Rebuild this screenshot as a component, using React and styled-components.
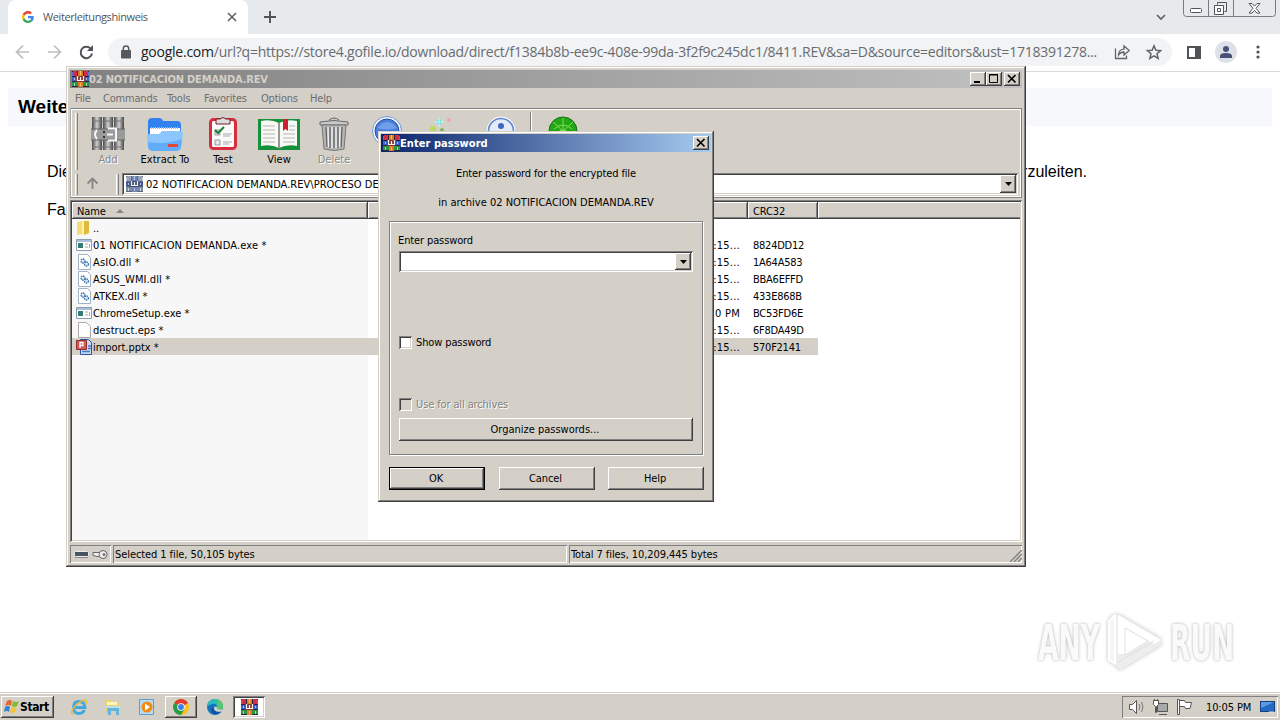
import React from 'react';
import styled, { createGlobalStyle, css } from 'styled-components';


const files = [
    { name: '..', icon: 'folder', date: '', crc: '' },
    { name: '01 NOTIFICACION DEMANDA.exe *', icon: 'exe', date: ':15...', crc: '8824DD12', spacing: 0.14 },
    { name: 'AsIO.dll *', icon: 'dll', date: ':15...', crc: '1A64A583', spacing: 0.18 },
    { name: 'ASUS_WMI.dll *', icon: 'dll', date: ':15...', crc: 'BBA6EFFD', spacing: 0.1 },
    { name: 'ATKEX.dll *', icon: 'dll', date: ':15...', crc: '433E868B', spacing: 0 },
    { name: 'ChromeSetup.exe *', icon: 'exe', date: '20 PM', crc: 'BC53FD6E', spacing: 0 },
    { name: 'destruct.eps *', icon: 'blank', date: ':15...', crc: '6F8DA49D', spacing: 0.05 },
    { name: 'import.pptx *', icon: 'pptx', date: ':15...', crc: '570F2141', spacing: -0.05, selected: true },
];

const App = () => {
    return (
        <>
            <GlobalStyle />
            <Screen>
                <TabStrip>
                    <Tab>
                        <GoogleIcon />
                        <TabTitle>Weiterleitungshinweis</TabTitle>
                        <svg width="10" height="10" viewBox="0 0 10 10"><path d="M1 1l8 8M9 1l-8 8" stroke="#5f6368" strokeWidth="1.6" /></svg>
                    </Tab>
                    <NewTab width="14" height="14" viewBox="0 0 14 14"><path d="M7 1v12M1 7h12" stroke="#505357" strokeWidth="1.9" /></NewTab>
                    <Chevron width="10" height="7" viewBox="0 0 10 7"><path d="M1 1l4 4 4-4" fill="none" stroke="#5f6368" strokeWidth="1.7" /></Chevron>
                    <ChromeControls />
                </TabStrip>

                <BrowserBar>
                    <NavIcons />
                    <AddressPill>
                        <svg width="10" height="14" viewBox="0 0 10 14"><rect x="0" y="5" width="10" height="8.5" rx="1" fill="#55585d" /><path d="M2.3 6V3.6a2.7 2.7 0 0 1 5.4 0V6" fill="none" stroke="#55585d" strokeWidth="1.5" /></svg>
                        <Url><b>google.com</b>/url?q=https://store4.gofile.io/download/direct/f1384b8b-ee9c-408e-99da-3f2f9c245dc1/8411.REV&amp;sa=D&amp;source=editors&amp;ust=1718391278...</Url>
                        <PillIcons />
                    </AddressPill>
                    <BarIcons />
                </BrowserBar>

                <Page>
                    <Banner>Weite</Banner>
                    <Paragraph><span>Die</span><span>rzuleiten.</span></Paragraph>
                    <Paragraph><span>Fa</span></Paragraph>
                </Page>

                <Taskbar>
                    <StartButton>
                        <StartIcon />
                        <b>Start</b>
                    </StartButton>
                    <TaskItem><IeIcon /></TaskItem>
                    <TaskItem><ExplorerIcon /></TaskItem>
                    <TaskItem><PlayerIcon /></TaskItem>
                    <TaskItem $state="raised"><ChromeIcon /></TaskItem>
                    <TaskItem><EdgeIcon /></TaskItem>
                    <TaskItem $state="pressed"><RarIcon /></TaskItem>
                    <Tray>
                        <TrayIcons />
                        <Clock>10:05 PM</Clock>
                        <svg width="16" height="14" viewBox="0 0 16 14"><rect x=".5" y="1.5" width="14" height="10" fill="#2469c4" stroke="#173f7c" /><path d="M1 2h13L1 8z" fill="#5b9ae4" /><path d="M9 12h5" stroke="#eee" /></svg>
                    </Tray>
                </Taskbar>

                <ArchiveWindow>
                    <TitleBar>
                        <RarIcon />
                        <TitleText $spacing="-0.17px">02 NOTIFICACION DEMANDA.REV</TitleText>
                        <CaptionButton><svg width="16" height="14"><path d="M4 10h6" stroke="#000" strokeWidth="2" /></svg></CaptionButton>
                        <CaptionButton><svg width="16" height="14"><path d="M3.500 2.500h8v8h-8zM3 3h9" fill="none" stroke="#000" /></svg></CaptionButton>
                        <CaptionButton $gap><CloseGlyph /></CaptionButton>
                    </TitleBar>
                    <Menu>
                        <span>File</span><span>Commands</span><span>Tools</span><span>Favorites</span><span>Options</span><span>Help</span>
                    </Menu>

                    <Rebar>
                        <ToolRow>
                            <Grip />
                            <Tool $width={56} $disabled><AddIcon />Add</Tool>
                            <Tool $width={58}><ExtractIcon />Extract To</Tool>
                            <Tool $width={58}><TestIcon />Test</Tool>
                            <Tool $width={54}><ViewIcon />View</Tool>
                            <Tool $width={56} $disabled><DeleteIcon />Delete</Tool>
                            <Tool $width={50}><FindIcon /></Tool>
                            <Tool $width={60}><WizardIcon /></Tool>
                            <Tool $width={58}><InfoIcon /></Tool>
                            <ToolDivider />
                            <Tool $width={62}><ScanIcon /></Tool>
                        </ToolRow>
                        <PathRow>
                            <Grip />
                            <svg width="38" height="18"><path d="M14.500 14V4M9.500 8.500l5-5 5 5" fill="none" stroke="#858585" strokeWidth="1.8" /></svg>
                            <Grip />
                            <PathField>
                                <RarIcon muted />
                                <span>02 NOTIFICACION DEMANDA.REV\PROCESO DE</span>
                                <DropButton><svg width="7" height="4"><path d="M0 0h7L3.500 4z" /></svg></DropButton>
                            </PathField>
                        </PathRow>
                    </Rebar>

                    <FileList>
                        <HeaderRow>
                            <HeaderCell>Name <svg width="8" height="4"><path d="M4 0l4 4H0z" fill="#888" /></svg></HeaderCell>
                            <HeaderCell />
                            <HeaderCell>CRC32</HeaderCell>
                            <HeaderCell $last />
                        </HeaderRow>
                        <Rows>
                            {files.map((file) => (
                                <FileRow key={file.name} $selected={file.selected}>
                                    <FileName $spacing={file.spacing}><FileIcon kind={file.icon} /><span>{file.name}</span></FileName>
                                    <FileDate>{file.date}</FileDate>
                                    <FileCrc>{file.crc}</FileCrc>
                                </FileRow>
                            ))}
                        </Rows>
                    </FileList>

                    <StatusBar>
                        <StatusCell><StatusIcons /></StatusCell>
                        <StatusCell>Selected 1 file, 50,105 bytes</StatusCell>
                        <StatusCell>
                            Total 7 files, 10,209,445 bytes
                            <SizeGrip width="12" height="12"><path d="M0 12L12 0M4 12l8-8M8 12l4-4" stroke="#808080" strokeWidth="1.4" /></SizeGrip>
                        </StatusCell>
                    </StatusBar>
                </ArchiveWindow>

                <Dialog>
                    <TitleBar $active>
                        <RarIcon />
                        <TitleText $active $spacing="0.05px">Enter password</TitleText>
                        <CaptionButton><CloseGlyph /></CaptionButton>
                    </TitleBar>
                    <Message>Enter password for the encrypted file</Message>
                    <Message $spacing="0">in archive 02 NOTIFICACION DEMANDA.REV</Message>
                    <Group>
                        <Label>Enter password</Label>
                        <Combo><DropButton><svg width="7" height="4"><path d="M0 0h7L3.500 4z" /></svg></DropButton></Combo>
                        <CheckLine $top={63}><CheckBox />Show password</CheckLine>
                        <CheckLine $top={48} $disabled><CheckBox $disabled />Use for all archives</CheckLine>
                        <Button $wide>Organize passwords...</Button>
                    </Group>
                    <ButtonRow>
                        <Button $primary>OK</Button>
                        <Button>Cancel</Button>
                        <Button>Help</Button>
                    </ButtonRow>
                </Dialog>

                <Watermark>
                    <WatermarkWord>ANY</WatermarkWord>
                    <svg width="60" height="64" viewBox="0 0 60 64" fill="none" strokeLinejoin="round">
                        <path d="M9 5L3 11v39l6 4z" fill="#f6f6f6" stroke="#fff" strokeWidth="2" />
                        <path d="M14 5l41 24v6L14 60l-4-3V5z" fill="#ededed" />
                        <path d="M12 44V5l43 25-7 4-29-17v27z" fill="#fff" />
                        <path d="M19 18l23 13-23 14z" fill="#fff" stroke="#e2e2e2" />
                        <path d="M12 52l36-21" stroke="#dedede" />
                    </svg>
                    <WatermarkWord>RUN</WatermarkWord>
                </Watermark>
            </Screen>
        </>
    );
}

export default App;


// Icons

const CloseGlyph = () => (
    <svg width="16" height="14"><path d="M4 3l7.500 7.500M11.500 3L4 10.500" stroke="#000" strokeWidth="1.7" /></svg>
)

const RarIcon = ({ muted }) => (
    <svg width="17" height="16" viewBox="0 0 17 16">
        <path d="M0 0h17v16H0z" fill={muted ? '#5a6478' : '#2b2438'} />
        <path d="M1 0h4v5H1zM12 0h4v5h-4z" fill={muted ? '#9aa3b5' : '#cf2f45'} />
        <path d="M0 6h5v4H0zM12 6h5v4h-5z" fill={muted ? '#3f5c94' : '#3a5fd0'} />
        <path d="M0 11h6v4H0zM11 11h6v4h-6z" fill={muted ? '#808b9e' : '#2c9340'} />
        <path d="M0 1h1v4H0zM16 1h1v4h-1z" fill={muted ? '#c5cbd8' : '#5b6fd4'} />
        <path d="M2 7h1v2H2zM14 7h1v2h-1zM2 12h1v3H2zM14 12h1v3h-1z" fill="#fff" opacity=".6" />
        <path d="M6 0h5v16H6z" fill={muted ? '#6e86b8' : '#e07a2c'} />
        <path d="M4 5h9v6H4z" fill={muted ? '#3d4f78' : '#7c3a34'} />
        <path d="M5.500 5v4.500h6V5M8.500 6v3" fill="none" stroke="#f5f0ee" strokeWidth="1.200" />
        <path d="M8 0h1v4H8zM8 12h1v3H8z" fill={muted ? '#b3c1dd' : '#f7c25d'} />
    </svg>
)

const GoogleIcon = () => (
    <svg width="12" height="12" viewBox="0 0 48 48">
        <path fill="#ea4335" d="M24 9.500c3.500 0 6.700 1.200 9.200 3.600l6.900-6.900C35.900 2.400 30.500 0 24 0 14.600 0 6.500 5.400 2.600 13.200l8 6.200C12.400 13.700 17.700 9.500 24 9.500z" />
        <path fill="#4285f4" d="M47 24.500c0-1.600-.2-3.100-.4-4.500H24v9h13c-.6 3-2.300 5.500-4.800 7.200l7.700 6C44.400 38 47 31.800 47 24.500z" />
        <path fill="#fbbc05" d="M10.500 28.600a14.500 14.500 0 0 1 0-9.200l-8-6.200a24 24 0 0 0 0 21.600z" />
        <path fill="#34a853" d="M24 48c6.500 0 11.900-2.100 15.900-5.800l-7.700-6c-2.200 1.500-4.900 2.300-8.200 2.300-6.300 0-11.600-4.200-13.500-9.900l-8 6.200C6.500 42.600 14.600 48 24 48z" />
    </svg>
)

const ChromeControls = () => (
    <Controls width="94" height="18" viewBox="0 0 94 18" fill="none">
        <path d="M.5 0v13.500q0 3 3 3h86q3 0 3-3V0M25.500 0v16M50.500 0v16" stroke="#777c82" />
        <rect x="7.500" y="8.500" width="11" height="4" rx="1" fill="#fff" stroke="#50545b" />
        <path d="M34.500 4.500v-2h9v9h-2" stroke="#50545b" />
        <path d="M31.500 5.500h9v9h-9zM34.500 8.500h3v3h-3z" fill="#fff" stroke="#50545b" />
        <path d="M66 3.500h3l2.500 2.700L74 3.500h3l-4 4.800 4 4.800h-3l-2.500-2.700-2.500 2.700h-3l4-4.800z" fill="#fff" stroke="#50545b" />
    </Controls>
)

const NavIcons = () => (
    <Nav width="80" height="16" viewBox="0 0 80 16" fill="none" strokeWidth="1.7">
        <path d="M14 8H1.500M8 1.500L1.500 8 8 14.500" stroke="#bcbec1" />
        <path d="M33 8h12.500M39 1.500L45.500 8 39 14.500" stroke="#bcbec1" />
        <path d="M75.500 4.500A5.700 5.700 0 1 0 77 9.500" stroke="#4f5358" strokeWidth="2" />
        <path d="M78 1v6h-6z" fill="#4f5358" />
    </Nav>
)

const PillIcons = () => (
    <svg width="48" height="16" viewBox="0 0 48 16" fill="none" stroke="#5f6368" strokeWidth="1.3">
        <path d="M1.500 4.500v10h11v-3M4.500 11c0-4 2.500-5.800 5.500-5.800V2l5.200 4.500L10 11V8C7.500 8 5.800 8.800 4.500 11z" />
        <path d="M40 1.800l1.900 4.400 4.700.4-3.600 3.100 1.100 4.600-4.100-2.500-4.100 2.500L37 9.700l-3.600-3.100 4.700-.4z" strokeWidth="1.500" />
    </svg>
)

const BarIcons = () => (
    <ProfileIcons width="80" height="24" viewBox="0 0 80 24">
        <rect x="2" y="7" width="12" height="11" fill="none" stroke="#505357" strokeWidth="2" />
        <path d="M9 6h6v13H9z" fill="#505357" />
        <circle cx="40" cy="12" r="11" fill="#dfe1e8" />
        <circle cx="40" cy="9" r="3" fill="#47517a" />
        <path d="M34 18v-2q0-3 6-3t6 3v2z" fill="#47517a" />
        <circle cx="72" cy="7" r="1.600" fill="#505357" /><circle cx="72" cy="12" r="1.600" fill="#505357" /><circle cx="72" cy="17" r="1.600" fill="#505357" />
    </ProfileIcons>
)

const AddIcon = () => (
    <svg width="34" height="36" viewBox="0 0 34 36">
        <defs>
            <linearGradient id="book"><stop stopColor="#4a4a4a" /><stop offset=".5" stopColor="#d0d0d0" /><stop offset="1" stopColor="#444" /></linearGradient>
        </defs>
        <path d="M1 1h10v33H1z" fill="url(#book)" />
        <path d="M12 1h10v33H12z" fill="url(#book)" />
        <path d="M23 1h10v33H23z" fill="url(#book)" />
        <path d="M1 5h32M1 31h32" stroke="#777" />
        <path d="M0 13h34v11H0z" fill="#9a9a9a" />
        <path d="M0 13h34M0 24h34" stroke="#666" />
        <path d="M6 14q-4 4.500 0 9" stroke="#f5f5f5" fill="none" strokeWidth="2" />
        <path d="M17 12.500h8v12h-8M16 18.500h6" stroke="#f8f8f8" fill="none" strokeWidth="2" />
        <path d="M13 15v2M13 20v2" stroke="#333" strokeWidth="2" />
    </svg>
)

const ExtractIcon = () => (
    <svg width="38" height="36" viewBox="0 0 38 36">
        <path d="M2 6q0-4 4-4h7q3 0 4 3h14q4 0 4 4v20H2z" fill="#3181f0" />
        <path d="M4 12h30v15H4z" fill="#fff" />
        <path d="M5 12h28" stroke="#bbb" strokeDasharray="1 1" strokeWidth="2" />
        <path d="M1 20q0-2 3-2h9l3-3h17q4 0 4 4l-2 12q-1 4-5 4H7q-4 0-5-4z" fill="#8cc6fd" />
        <path d="M2 26q17 3 34-3l-1 8q-1 4-5 4H7q-4 0-5-4z" fill="#62adfa" />
        <path d="M22 28h10v3H22z" fill="#e34735" />
    </svg>
)

const TestIcon = () => (
    <svg width="30" height="36" viewBox="0 0 30 36">
        <rect x="2.500" y="3.500" width="25" height="29" rx="3" fill="#fafafa" stroke="#d92c3f" strokeWidth="3" />
        <path d="M8 3h4q3-3 6 0h4v5H8z" fill="#ddd" stroke="#702026" />
        <path d="M7 14h5v5H7zM7 24h5v5H7z" fill="#e6e6e6" stroke="#999" />
        <path d="M7 14l3 3 6-6" fill="none" stroke="#148434" strokeWidth="2" />
        <path d="M15 18h9M15 20h7M15 26h9M15 28h6" stroke="#aaa" />
    </svg>
)

const ViewIcon = () => (
    <svg width="44" height="36" viewBox="0 0 44 36">
        <path d="M1 3h42v31H1z" fill="#15913c" />
        <path d="M4 5q10-2 18 2 8-4 18-2v25q-10-2-18 2-8-4-18-2z" fill="#f8f8f4" />
        <path d="M22 6v27" stroke="#777" strokeWidth="1.500" />
        <path d="M6 10h12M6 14h12M6 18h12M6 22h12M6 26h12M26 18h12M26 22h12M26 26h12M32 10h6M32 14h6" stroke="#b5b5b5" />
        <path d="M26 3h5v12l-2.500-2-2.500 2z" fill="#ca2030" />
    </svg>
)

const DeleteIcon = () => (
    <svg width="32" height="36" viewBox="0 0 32 36">
        <path d="M11 4q5-4 10 0M2 6q14-3 28 0v3H2z" fill="#c9c9c9" stroke="#666" />
        <path d="M4 9h24l-2 24q-10 3-20 0z" fill="#b5b5b5" stroke="#777" />
        <path d="M8 11l1 20M12 11v21M16 11v21M20 11v21M24 11l-1 20" stroke="#666" strokeWidth="1.300" />
        <path d="M10 11l.5 20M14 11v21M18 11v21M22 11l-.5 20" stroke="#f4f4f4" strokeWidth="1.300" />
    </svg>
)

const FindIcon = () => (
    <svg width="32" height="36" viewBox="0 0 32 36"><circle cx="16" cy="15" r="14.500" fill="#f3f8ff" stroke="#6e97d8" /><circle cx="16" cy="15" r="12" fill="#4a7fdb" stroke="#2350a0" /><path d="M6 12q10-12 20 0-10 3-20 0z" fill="#6f9fe8" /></svg>
)

const WizardIcon = () => (
    <svg width="32" height="36" viewBox="0 0 32 36"><circle cx="13" cy="6" r="2.500" fill="#63dcdc" /><circle cx="23" cy="4" r="2" fill="#efa6b3" /><circle cx="7" cy="13" r="3" fill="#b8dc54" /><circle cx="16" cy="14" r="2" fill="#82b35b" /><path d="M13 2v9M9 6h9" stroke="#bff" /></svg>
)

const InfoIcon = () => (
    <svg width="32" height="36" viewBox="0 0 32 36"><circle cx="16" cy="15" r="14" fill="#e4ebf8" stroke="#fff" /><circle cx="16" cy="15" r="12.500" fill="none" stroke="#6287cb" strokeWidth="1.600" /><circle cx="16" cy="10" r="3" fill="#3d69c1" /></svg>
)

const ScanIcon = () => (
    <svg width="32" height="36" viewBox="0 0 32 36"><circle cx="16" cy="15" r="14" fill="#23a815" stroke="#157018" /><path d="M16 2v26M6 6l20 18M26 6L6 24M7 13q9-8 18 0M10 17q6-6 12 0" fill="none" stroke="#7be052" /></svg>
)

const FileIcon = ({ kind }) => (
    <svg width="16" height="16" viewBox="0 0 16 16">
        {kind === 'folder' && <><path d="M1 2l6-1v13l-6 1z" fill="#f4db73" /><path d="M8 1h5v12l-5 2z" fill="#dfbb3d" /><path d="M6 2l2-1v13l-2 1z" fill="#fff2ab" /></>}
        {kind === 'exe' && <><path d="M.5 2.500h15v11H.5z" fill="#fff" stroke="#8b9db0" /><path d="M1 3h14v2H1z" fill="#a9c0db" /><path d="M2 6h5v5H2z" fill="#347d72" /><path d="M9 7h3M9 10h3M13.500 7v4" stroke="#aaa" /></>}
        {kind === 'dll' && <><path d="M2.500.5h9l3 3v12h-12z" fill="#fff" stroke="#9fb2c4" /><circle cx="7" cy="7" r="2" fill="#dfeaf5" stroke="#3974ad" strokeDasharray="1.500 .6" strokeWidth="1.300" /><circle cx="10.500" cy="10" r="2" fill="#dfeaf5" stroke="#3974ad" strokeDasharray="1.500 .6" strokeWidth="1.300" /></>}
        {kind === 'blank' && <path d="M2.500.5h8l4 4v11h-12z" fill="#fff" stroke="#aaa" />}
        {kind === 'pptx' && <><path d="M4.500.5h8l3 3v12h-11z" fill="#c9d7f0" stroke="#34539e" /><path d="M6 12.500h8M12 7h3M12 9.500h3" stroke="#4e79be" strokeWidth="1.500" /><path d="M.5 1.500h10v9H.5z" fill="#d05a50" stroke="#8c2f35" /><path d="M4 9V3.500h3v3H4" fill="none" stroke="#fff" strokeWidth="1.300" /></>}
    </svg>
)

const StatusIcons = () => (
    <svg width="36" height="13" viewBox="0 0 36 13">
        <rect x="2.500" y="3.500" width="14" height="5" rx="1" fill="#465560" stroke="#eee" />
        <path d="M3 9.500h13" stroke="#888" />
        <path d="M21 4.500h7v4h-3l-4-1z" fill="#eee" stroke="#666" />
        <circle cx="31" cy="6.500" r="4" fill="#eee" stroke="#666" /><circle cx="32" cy="6.500" r="1.500" fill="#777" />
    </svg>
)

const StartIcon = () => (
    <svg width="16" height="16" viewBox="0 0 16 16">
        <path d="M3 2q3-2 5 0L7 7Q5 5 1 7z" fill="#e9652d" /><path d="M9 2q3 2 6 0l-2 5q-3 2-5 0z" fill="#83b934" />
        <path d="M1 8q3-2 5 0l-1 5q-2-2-5 0z" fill="#3781cf" /><path d="M8 8q3 2 5 0l-2 5q-2 2-5 0z" fill="#f3c432" />
    </svg>
)

const IeIcon = () => (
    <svg width="18" height="18" viewBox="0 0 18 18"><path d="M14.500 12q-1.500 3.500-5.500 3.500-5.500 0-5.500-6T9 3.500q5.500 0 6 6H5" fill="none" stroke="#41a7df" strokeWidth="2.800" /><path d="M3 16.500q-4-2 3-9.500Q13 1 16 2.500q1.500 1-.5 4" fill="none" stroke="#e7bb3b" strokeWidth="1.500" /></svg>
)

const ExplorerIcon = () => (
    <svg width="18" height="18" viewBox="0 0 18 18"><path d="M2 2h6l1 2h7v9H2z" fill="#ecd36c" /><path d="M3 4h10v3H3z" fill="#fff6bd" /><path d="M3 9h12v8h-3v-4H7v4H4z" fill="#63b5dc" /><path d="M2 8h14v2H2z" fill="#b7dfed" /></svg>
)

const PlayerIcon = () => (
    <svg width="18" height="18" viewBox="0 0 18 18"><path d="M1.500 1.500h14v15h-14z" fill="#b9daf3" stroke="#5b9ed3" /><circle cx="9" cy="9" r="5.500" fill="#f08a18" /><path d="M7 5.500L12 9l-5 3.500z" fill="#fff" /></svg>
)

const ChromeIcon = () => (
    <svg width="16" height="16" viewBox="0 0 16 16"><circle cx="8" cy="8" r="8" fill="#fbc116" /><path d="M8 8L1.100 4A8 8 0 0 1 15 4z" fill="#e33b2e" /><path d="M8 8L1.100 4A8 8 0 0 0 8 16l3.500-6z" fill="#279b48" /><circle cx="8" cy="8" r="3.800" fill="#fff" /><circle cx="8" cy="8" r="2.900" fill="#3b7ded" /></svg>
)

const EdgeIcon = () => (
    <svg width="16" height="16" viewBox="0 0 16 16"><circle cx="8" cy="8" r="8" fill="#1472bf" /><path d="M0 8a8 8 0 0 1 16 0q0 3-4 3-3 0-2-3 0-4-5-3-4 1-5 3z" fill="#2bbdbb" /><path d="M9 0q7 1 7 8 0 3-4 3-3 0-2-3 2-4-1-8z" fill="#5ac66b" /><path d="M6 8q0 6 8 4-3 4-7 3-5-3-1-7z" fill="#0d4f9d" /><path d="M10 8q-1 3 6 2.500l-1 2q-5 1-7-1-2-2 0-4z" fill="#d4d0c8" /></svg>
)

const TrayIcons = () => (
    <svg width="66" height="18" viewBox="0 0 66 18" fill="#fff" stroke="#555">
        <path d="M1.500 6.500h3l4-4v13l-4-4h-3z" /><path d="M11 6q2 3 0 6M13.500 4q3 5 0 10" fill="none" stroke="#777" />
        <path d="M29.500 5.500h10v8h-10zM31 16.500h8" fill="#aaa" /><path d="M25.500 2.500h5v4l-2 2v6h-1v-6l-2-2zM26.500 1v2M29.500 1v2" />
        <path d="M49.500 1.500h2v15h-2z" /><path d="M51.500 2.500h5l1 2h6l-1.500 6h-4.500l-1-2h-5z" />
    </svg>
)


// Styles

const GlobalStyle = createGlobalStyle`
    * {
        box-sizing: border-box;
    }

    body {
        margin: 0;
        overflow: hidden;
    }

    svg {
        display: block;
        flex: none;
    }
`

const raised = css`
    box-shadow: inset -1px -1px #404040, inset 1px 1px #fff, inset -2px -2px #808080;
`

const sunken = css`
    box-shadow: inset 1px 1px #808080, inset -1px -1px #fff, inset 2px 2px #404040, inset -2px -2px #d4d0c8;
`

const Screen = styled.div`
    position: relative;
    display: flex;
    flex-direction: column;
    width: 1280px;
    height: 720px;
    overflow: hidden;
    background: #fff;
    font: 11px/13px "DejaVu Sans Condensed", "DejaVu Sans", sans-serif;
    font-stretch: condensed;
    letter-spacing: -0.12px;
    color: #000;
    white-space: nowrap;
`

const TabStrip = styled.div`
    display: flex;
    height: 34px;
    padding-left: 8px;
    background: #e7eaed;
`

const Tab = styled.div`
    display: flex;
    align-items: center;
    width: 240px;
    padding: 0 11px 0 14px;
    background: #fff;
    border-radius: 8px 8px 0 0;
`

const TabTitle = styled.div`
    flex: 1;
    margin-left: 9px;
    font: 11px/14px "Open Sans", sans-serif;
    letter-spacing: -0.4px;
    color: #53565a;
`

const NewTab = styled.svg`
    margin: 10px 0 0 15px;
`

const Chevron = styled.svg`
    margin: 14px 17px 0 auto;
`

const Controls = styled.svg`
    margin-right: 3px;
`

const BrowserBar = styled.div`
    display: flex;
    align-items: center;
    height: 38px;
    padding-bottom: 2px;
    border-bottom: 1px solid #d9d9db;
`

const Nav = styled.svg`
    margin-left: 15px;
`

const AddressPill = styled.div`
    display: flex;
    align-items: center;
    flex: none;
    width: 1064px;
    height: 28px;
    margin-left: 13px;
    padding: 0 10px 0 13px;
    border-radius: 14px;
    background: #f1f3f5;
`

const Url = styled.div`
    flex: 1;
    min-width: 0;
    margin-left: 10px;
    padding-top: 1px;
    font: 14px/20px "Open Sans", sans-serif;
    letter-spacing: -0.245px;
    color: #686c70;

    b {
        font-weight: 400;
        color: #202124;
    }
`

const ProfileIcons = styled.svg`
    margin-left: 14px;
`

const Page = styled.div`
    flex: 1;
    padding: 16px 8px 0;
    font: 16px/20px "Liberation Sans", Arial, sans-serif;
    letter-spacing: 0;
`

const Banner = styled.div`
    height: 38px;
    margin-bottom: 36px;
    padding: 0 10px;
    background: #f6f8fb;
    font-size: 19px;
    font-weight: 700;
    line-height: 38px;
`

const Paragraph = styled.div`
    display: flex;
    justify-content: space-between;
    width: 1040px;
    margin: 0 0 18px 39px;
`

const Taskbar = styled.div`
    display: flex;
    align-items: center;
    height: 28px;
    padding: 1px 2px 0 1px;
    border-top: 1px solid #d4d0c8;
    background: #d4d0c8;
    box-shadow: inset 0 1px #fff;
`

const StartButton = styled.div`
    display: flex;
    align-items: center;
    width: 53px;
    height: 22px;
    margin-right: 9px;
    padding-left: 3px;
    ${raised}

    b {
        font-size: 12px;
        letter-spacing: -0.4px;
    }
`

const TaskItem = styled.div`
    display: flex;
    align-items: center;
    justify-content: center;
    width: 32px;
    height: 22px;
    margin-right: 2px;
    ${props => props.$state === 'raised' && raised}
    ${props => props.$state === 'pressed' && css`
        background: #fff;
        ${sunken}
    `}
`

const Tray = styled.div`
    display: flex;
    align-items: center;
    width: 156px;
    height: 22px;
    margin-left: auto;
    padding-left: 6px;
    box-shadow: inset 1px 1px #808080, inset -1px -1px #fff;
`

const Clock = styled.div`
    width: 46px;
    margin: 0 8px 0 12px;
`

const Window = styled.div`
    position: absolute;
    background: #d4d0c8;
    box-shadow: inset -1px -1px #404040, inset 1px 1px #d4d0c8, inset -2px -2px #808080, inset 2px 2px #fff;
`

const ArchiveWindow = styled(Window)`
    left: 66px;
    top: 66px;
    width: 960px;
    height: 501px;
    padding: 4px;
`

const Dialog = styled(Window)`
    left: 378px;
    top: 131px;
    width: 336px;
    height: 371px;
    padding: 3px;
`

const TitleBar = styled.div`
    display: flex;
    align-items: center;
    height: 18px;
    padding: 0 2px;
    background: ${props => props.$active ? 'linear-gradient(90deg, #0a246a, #a6caf0)' : 'linear-gradient(90deg, #808080, #c0c0c0)'};
`

const TitleText = styled.div`
    flex: 1;
    font-weight: 700;
    letter-spacing: ${props => props.$spacing};
    color: ${props => props.$active ? '#fff' : '#d4d0c8'};
`

const CaptionButton = styled.div`
    width: 16px;
    height: 14px;
    margin-left: ${props => props.$gap ? '2px' : '0'};
    background: #d4d0c8;
    ${raised}
`

const Menu = styled.div`
    display: grid;
    grid-template-columns: 28px 64px 37px 57px 49px 1fr;
    height: 20px;
    padding: 4px 5px;
    letter-spacing: -0.2px;
    color: #6d6d6d;
`

const Rebar = styled.div`
    height: 90px;
    padding: 3px 3px 0 4px;
    border: 1px solid #808080;
    border-left-color: #aaa;
    box-shadow: inset 1px 1px #fff, inset -1px -1px #fff;
`

const Grip = styled.div`
    flex: none;
    width: 3px;
    margin: 1px 0;
    border-left: 1px solid #fff;
    border-right: 1px solid #808080;
`

const ToolRow = styled.div`
    display: flex;
    height: 59px;

    ${Grip} {
        margin-right: 2px;
    }
`

const Tool = styled.div`
    display: flex;
    flex-direction: column;
    align-items: center;
    flex: none;
    width: ${props => props.$width}px;
    padding-top: 4px;
    color: ${props => props.$disabled ? '#8a8883' : '#000'};
    text-shadow: ${props => props.$disabled ? '1px 1px #fff' : 'none'};
    letter-spacing: 0;
    line-height: 15px;
`

const ToolDivider = styled.div`
    width: 2px;
    height: 52px;
    border-left: 1px solid #808080;
    border-right: 1px solid #fff;
`

const PathRow = styled.div`
    display: flex;
    align-items: center;
    height: 26px;

    ${Grip} {
        height: 21px;
    }
`

const PathField = styled.div`
    display: flex;
    align-items: center;
    flex: 1;
    height: 22px;
    margin-left: 3px;
    padding: 2px 2px 2px 4px;
    background: #fff;
    ${sunken}

    span {
        flex: 1;
        margin-left: 3px;
        letter-spacing: 0.02px;
    }
`

const DropButton = styled.div`
    display: flex;
    align-items: center;
    justify-content: center;
    width: 16px;
    height: 100%;
    margin-left: auto;
    background: #d4d0c8;
    ${raised}
`

const FileList = styled.div`
    height: 342px;
    margin-top: 2px;
    padding: 2px;
    background: #fff;
    ${sunken}
`

const HeaderRow = styled.div`
    display: grid;
    grid-template-columns: 296px 380px 70px 1fr;
    height: 17px;
`

const HeaderCell = styled.div`
    display: flex;
    align-items: center;
    gap: 10px;
    padding: 1px 0 0 5px;
    background: #d4d0c8;
    ${raised}
    ${props => props.$last && css`
        box-shadow: inset 0 -1px #404040, inset 1px 1px #fff, inset 0 -2px #808080;
    `}
`

const Rows = styled.div`
    height: 321px;
    background: linear-gradient(90deg, #f7f7f7 296px, #fff 296px);
`

const FileRow = styled.div`
    display: grid;
    grid-template-columns: 296px 380px 70px;
    align-items: center;
    width: 746px;
    height: 17px;
    background: ${props => props.$selected ? '#d4d0c8' : 'transparent'};
`

const FileName = styled.div`
    display: flex;
    align-items: center;
    gap: 1px;
    padding-left: 4px;
    letter-spacing: ${props => props.$spacing}px;

    span {
        padding-top: 2px;
    }
`

const FileDate = styled.div`
    padding: 2px 8px 0 0;
    text-align: right;
    letter-spacing: 0.25px;
`

const FileCrc = styled.div`
    padding: 2px 0 0 5px;
    letter-spacing: -0.25px;
`

const StatusBar = styled.div`
    display: grid;
    grid-template-columns: 41px 454px 1fr;
    gap: 2px;
    height: 21px;
    padding-top: 3px;
`

const StatusCell = styled.div`
    display: flex;
    align-items: center;
    height: 18px;
    padding-left: 2px;
    letter-spacing: -0.08px;
    box-shadow: inset 1px 1px #808080, inset -1px -1px #fff;
`

const SizeGrip = styled.svg`
    margin: 4px 0 0 auto;
`

const Message = styled.div`
    padding-top: 16px;
    text-align: center;
    letter-spacing: ${props => props.$spacing || '-0.12px'};

    ${TitleBar} + & {
        padding-top: 15px;
    }
`

const Group = styled.div`
    height: 234px;
    margin: 12px 8px 0;
    padding: 12px 9px;
    border: 1px solid #808080;
    box-shadow: inset 1px 1px #fff, 1px 1px #fff;
`

const Label = styled.div`
    margin-left: -1px;
`

const Combo = styled.div`
    display: flex;
    height: 21px;
    margin-top: 4px;
    padding: 2px;
    background: #fff;
    ${sunken}
`

const CheckLine = styled.div`
    display: flex;
    align-items: center;
    gap: 4px;
    height: 14px;
    margin-top: ${props => props.$top}px;
    color: ${props => props.$disabled ? '#85837f' : '#000'};
    text-shadow: ${props => props.$disabled ? '1px 1px #fff' : 'none'};
`

const CheckBox = styled.div`
    width: 13px;
    height: 13px;
    background: ${props => props.$disabled ? '#d4d0c8' : '#fff'};
    ${sunken}
`

const Button = styled.div`
    display: flex;
    align-items: center;
    justify-content: center;
    width: ${props => props.$wide ? '294px' : '96px'};
    height: 23px;
    margin-top: ${props => props.$wide ? '7px' : '0'};
    padding-right: 2px;
    border: ${props => props.$primary ? '1px solid #000' : 'none'};
    letter-spacing: ${props => props.$wide ? '0' : '-0.1px'};
    ${raised}
`

const ButtonRow = styled.div`
    display: flex;
    justify-content: space-between;
    margin: 12px 7px 0 8px;
`

const Watermark = styled.div`
    position: absolute;
    left: 1038px;
    top: 608px;
    display: flex;
    align-items: center;
    gap: 4px;
    color: #fafafa;

    svg {
        filter: drop-shadow(0 0 2px #c0c0c0);
    }
`

const WatermarkWord = styled.div`
    width: 64px;
    padding-top: 3px;
    font: 700 50px/64px "DejaVu Sans Condensed", "DejaVu Sans", sans-serif;
    font-stretch: condensed;
    letter-spacing: 0;
    text-shadow: 0 0 4px #aaa;
    transform: scaleX(0.59);
    transform-origin: left;
`
